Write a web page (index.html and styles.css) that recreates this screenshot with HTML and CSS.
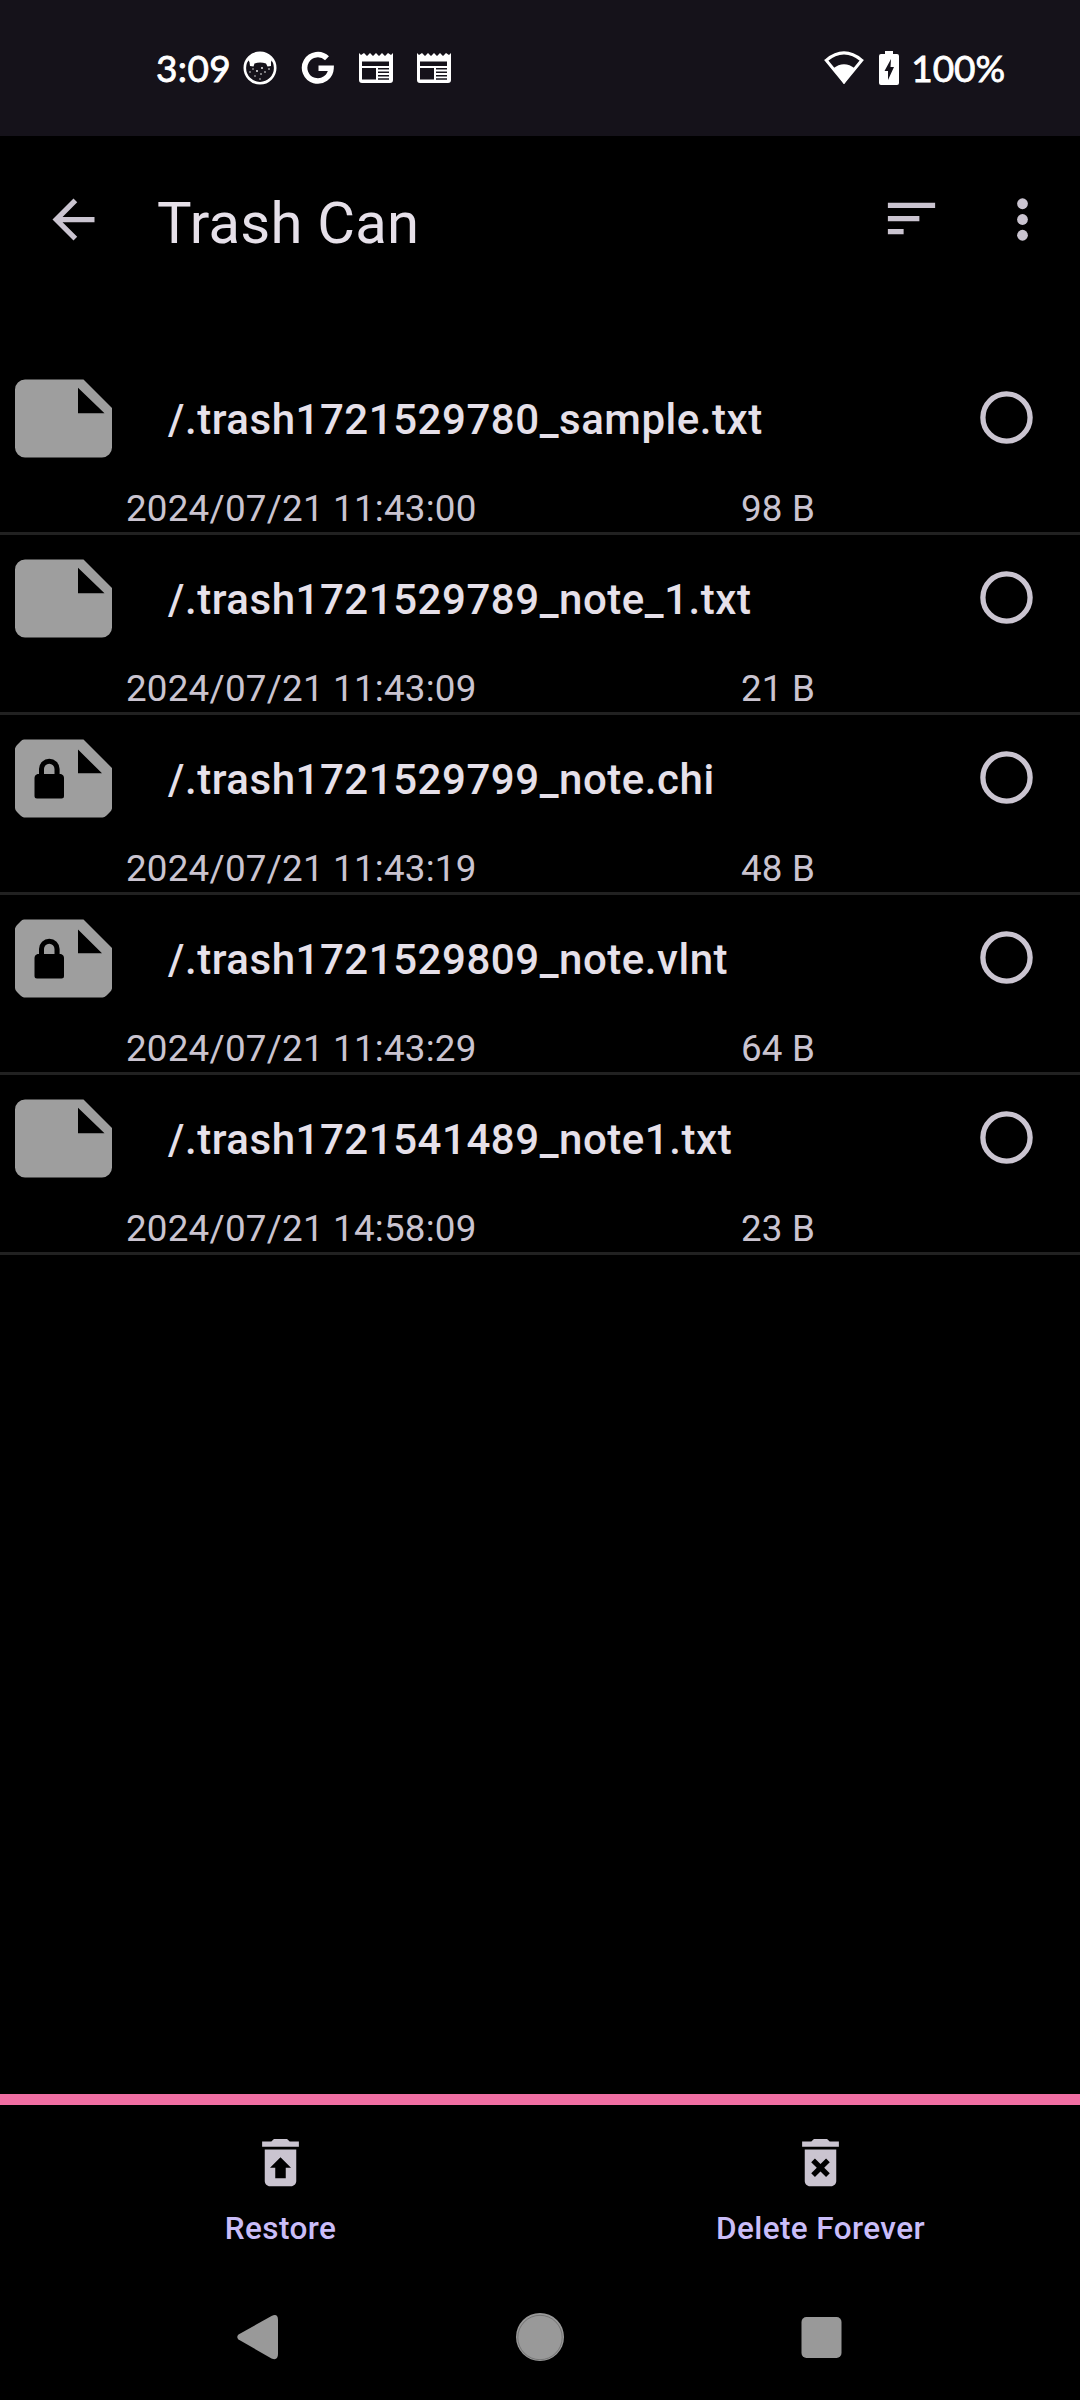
FILE: index.html
```html
<!DOCTYPE html>
<html lang="en">
<head>
<meta charset="utf-8">
<title>Trash Can</title>
<link rel="stylesheet" href="styles.css">
</head>
<body>
<!-- shared shapes -->
<svg class="defs" width="0" height="0">
  <symbol id="news" viewBox="0 0 34 30">
    <path fill-rule="evenodd" d="M0 0l2 2 3-2 3 3 3-3 3 3 3-3 3 3 3-3 3 3 3-3 3 2 2-2v27a3 3 0 0 1-3 3H3a3 3 0 0 1-3-3zM3 8.500v4.500h27V8.500zM3 15v11.500h14V15zM19 15v1.500h11V15zM19 18.500v1.500h11v-1.500zM19 22v1.500h11V22zM19 25.200v1.500h11v-1.500z"/>
  </symbol>
  <symbol id="file" viewBox="0 0 98 79">
    <path fill-rule="evenodd" d="M10 .5H68.500L97 29V68.500a10 10 0 0 1-10 10H10a10 10 0 0 1-10-10V10.500a10 10 0 0 1 10-10zM63 8.700V34.300H89.500z"/>
  </symbol>
  <symbol id="locked" viewBox="0 0 98 79">
    <path fill-rule="evenodd" d="M9 .5H68.500L97 29V69.500Q96.500 71.500 95 73L91.500 76.500Q89.500 78.500 87.500 78.500H9Q7 78 5.500 76.500L2 73Q0 71 0 69V9.500Q.5 7.500 2 6L5.500 2.500Q7 .5 9 .5zM63 10.500V34.300H87z"/>
    <path fill="#000" fill-rule="evenodd" d="M24 35V30a10.300 10.300 0 0 1 20.600 0V35h1.400q3 1 3 4V57q0 2.500-2.500 2.500H22q-2.500 0-2.500-2.500V39q0-3 3-4zM29 35H39.500V30a5.200 5.200 0 0 0-10.500 0z"/>
  </symbol>
  <symbol id="radio" viewBox="0 0 53 53">
    <circle cx="26.500" cy="26.500" r="23.600" fill="none" stroke="#cac4d0" stroke-width="5.300"/>
  </symbol>
</svg>

<div class="statusbar">
  <span class="clock">3:09</span>
  <div class="notifs">
    <svg width="34" height="34" viewBox="0 0 34 34">
      <circle cx="17" cy="17" r="15.200" fill="none" stroke="#fff" stroke-width="2.600"/>
      <path fill="#fff" d="M5 9Q8 1 17 1T29 9L28 11 28 15 24.500 15.500 23 12.500Q17 10.500 11.500 12.500L10.500 15.500 7 15 6.500 11z"/>
      <g fill="#fff">
        <circle cx="10" cy="18" r=".7"/><circle cx="14" cy="20" r=".9"/><circle cx="19" cy="17" r=".9"/>
        <circle cx="22" cy="21" r=".8"/><circle cx="26" cy="18" r=".8"/><circle cx="7" cy="21" r=".7"/>
        <circle cx="12" cy="25" r=".7"/><circle cx="18" cy="23" r=".8"/><circle cx="17" cy="28" r=".7"/>
      </g>
    </svg>
    <svg class="google" width="34" height="34" viewBox="0 0 34 34">
      <path fill="none" stroke="#fff" stroke-width="5.600" d="M26 7.300A13.200 13.200 0 1 0 30 17.300H17.500"/>
    </svg>
    <svg class="news" width="34" height="30"><use href="#news"/></svg>
    <svg class="news" width="34" height="30"><use href="#news"/></svg>
  </div>
  <div class="system">
    <svg width="40" height="34" viewBox="0 0 40 34">
      <path fill="none" stroke="#fff" stroke-width="3" d="M2.200 9.300Q20-5.500 37.800 9.300L20 31z"/>
      <path fill="#fff" d="M9 17.500Q20 9 31 17.500L20 33z"/>
    </svg>
    <svg class="battery" width="20" height="34" viewBox="0 0 20 34">
      <path fill="#fff" fill-rule="evenodd" d="M6 0h8v3h4a2 2 0 0 1 2 2v27a2 2 0 0 1-2 2H2a2 2 0 0 1-2-2V5a2 2 0 0 1 2-2h4zM12 8L5.500 20H9V29L15 16H11.500z"/>
    </svg>
    <span class="percent">100%</span>
  </div>
</div>

<div class="toolbar">
  <svg class="back" width="63" height="63" viewBox="0 0 24 24"><path d="M20 11H7.830l5.590-5.590L12 4l-8 8 8 8 1.410-1.410L7.830 13H20z"/></svg>
  <h1>Trash Can</h1>
  <svg class="sort" width="63" height="63" viewBox="0 0 24 24"><path d="M3 18h6v-2H3zM3 6v2h18V6zM3 13h12v-2H3z"/></svg>
  <svg class="more" width="63" height="63" viewBox="0 0 24 24"><circle cx="12" cy="6" r="2.050"/><circle cx="12" cy="12" r="2.050"/><circle cx="12" cy="18" r="2.050"/></svg>
</div>

<div class="list">
  <div class="row">
    <svg class="file" width="98" height="79"><use href="#file"/></svg>
    <div class="name">/.trash1721529780_sample.txt</div>
    <svg class="radio" width="53" height="53"><use href="#radio"/></svg>
    <div class="date">2024/07/21 11:43:00</div>
    <div class="size">98 B</div>
  </div>
  <div class="row">
    <svg class="file" width="98" height="79"><use href="#file"/></svg>
    <div class="name">/.trash1721529789_note_1.txt</div>
    <svg class="radio" width="53" height="53"><use href="#radio"/></svg>
    <div class="date">2024/07/21 11:43:09</div>
    <div class="size">21 B</div>
  </div>
  <div class="row">
    <svg class="file" width="98" height="79"><use href="#locked"/></svg>
    <div class="name">/.trash1721529799_note.chi</div>
    <svg class="radio" width="53" height="53"><use href="#radio"/></svg>
    <div class="date">2024/07/21 11:43:19</div>
    <div class="size">48 B</div>
  </div>
  <div class="row">
    <svg class="file" width="98" height="79"><use href="#locked"/></svg>
    <div class="name">/.trash1721529809_note.vlnt</div>
    <svg class="radio" width="53" height="53"><use href="#radio"/></svg>
    <div class="date">2024/07/21 11:43:29</div>
    <div class="size">64 B</div>
  </div>
  <div class="row">
    <svg class="file" width="98" height="79"><use href="#file"/></svg>
    <div class="name">/.trash1721541489_note1.txt</div>
    <svg class="radio" width="53" height="53"><use href="#radio"/></svg>
    <div class="date">2024/07/21 14:58:09</div>
    <div class="size">23 B</div>
  </div>
</div>

<div class="actions">
  <div class="action">
    <svg width="63" height="63" viewBox="0 0 24 24"><path fill-rule="evenodd" d="M19 4h-3.500l-1-1h-5l-1 1H5v2h14zM6 7v12c0 1.100.9 2 2 2h8c1.100 0 2-.9 2-2V7zM12 10l4 4h-2v4h-4v-4H8z"/></svg>
    <span>Restore</span>
  </div>
  <div class="action">
    <svg width="63" height="63" viewBox="0 0 24 24"><path fill-rule="evenodd" d="M19 4h-3.500l-1-1h-5l-1 1H5v2h14zM6 7v12c0 1.100.9 2 2 2h8c1.100 0 2-.9 2-2V7zM8.460 11.880l1.410-1.410L12 12.590l2.120-2.120 1.410 1.410L13.410 14l2.120 2.120-1.410 1.410L12 15.410l-2.120 2.120-1.410-1.410L10.590 14z"/></svg>
    <span>Delete Forever</span>
  </div>
</div>

<div class="navbar">
  <svg width="48" height="48" viewBox="0 0 48 48"><path d="M4.500 21.500L37.500 3Q44 0 44 7V41Q44 48 37.500 45.500L4.500 26.500Q2 24 4.500 21.500z"/></svg>
  <svg width="48" height="48" viewBox="0 0 48 48"><circle cx="24" cy="24" r="24"/><circle cx="24" cy="24.500" r="22.200" fill="none" stroke="#666" stroke-width=".7"/></svg>
  <svg width="48" height="48" viewBox="0 0 48 48"><rect x="3.500" y="4" width="40" height="41" rx="5"/></svg>
</div>
</body>
</html>
```
FILE: styles.css
```css
* {box-sizing: border-box;}

body {
  margin: 0;
  width: 1080px;
  height: 2400px;
  display: flex;
  flex-direction: column;
  overflow: hidden;
  background-color: #000;
  color: #e6e0e9;
  font-family: Roboto, "Noto Sans", sans-serif;
}

svg {
  display: block;
  flex: none;
}

.defs {
  position: absolute;
}

.statusbar {
  height: 136px;
  padding: 0 75px 0 156px;
  display: flex;
  align-items: center;
  background-color: #15121a;
  color: #fff;
  fill: #fff;
  font-family: Lato, sans-serif;
  font-size: 37px;
  line-height: 44px;
  -webkit-text-stroke: 0.800px #fff;
}

.clock {
  width: 87px;
  letter-spacing: 0.400px;
}

.notifs {
  display: flex;
  align-items: center;
}

.google {
  margin-left: 24px;
}

.news {
  margin-left: 24px;
}

.system {
  margin-left: auto;
  display: flex;
  align-items: center;
}

.battery {
  margin: 0 12px 0 15px;
}

.percent {
  letter-spacing: -0.100px;
}

.toolbar {
  height: 219px;
  padding: 51px 26px 0 42px;
  display: flex;
  align-items: flex-start;
  fill: #cac4d0;
}

.toolbar h1 {
  margin: 2px 0 0 52px;
  font-size: 58px;
  font-weight: 400;
  line-height: 68px;
  letter-spacing: 0.250px;
}

.back, .more {
  margin-top: 1px;
}

.sort {
  margin: 0 48px 0 auto;
}

.row {
  height: 180px;
  padding-left: 14px;
  display: grid;
  grid-template-columns: 112px 615px 239px 53px;
  grid-template-rows: 119px 58px;
  border-bottom: 3px solid #212121;
}

.file {
  margin: 24px 0 0 0.600px;
  fill: #9e9e9e;
}

.name {
  grid-column: 2 / 4;
  margin: 40px 0 0 42px;
  font-size: 42px;
  font-weight: 500;
  line-height: 50px;
  letter-spacing: 0.540px;
}

.radio {
  margin-top: 36px;
}

.date, .size {
  margin-top: 13px;
  color: #cac4d0;
  font-size: 36.750px;
  line-height: 43px;
  letter-spacing: 0.220px;
}

.date {
  grid-column: 2;
}

.actions {
  height: 192px;
  margin-top: auto;
  padding-left: 10.500px;
  display: flex;
  border-top: 11px solid #f06ea2;
}

.action {
  width: 540px;
  flex: none;
  padding-top: 26px;
  display: flex;
  flex-direction: column;
  align-items: center;
  fill: #cac4d0;
  color: #cabdf9;
  font-size: 31.500px;
  font-weight: 500;
  line-height: 38px;
  letter-spacing: 0.400px;
}

.action span {
  margin-top: 16px;
}

.navbar {
  height: 114px;
  padding: 27px 234px 0;
  display: flex;
  justify-content: space-between;
  fill: #999;
}
```
